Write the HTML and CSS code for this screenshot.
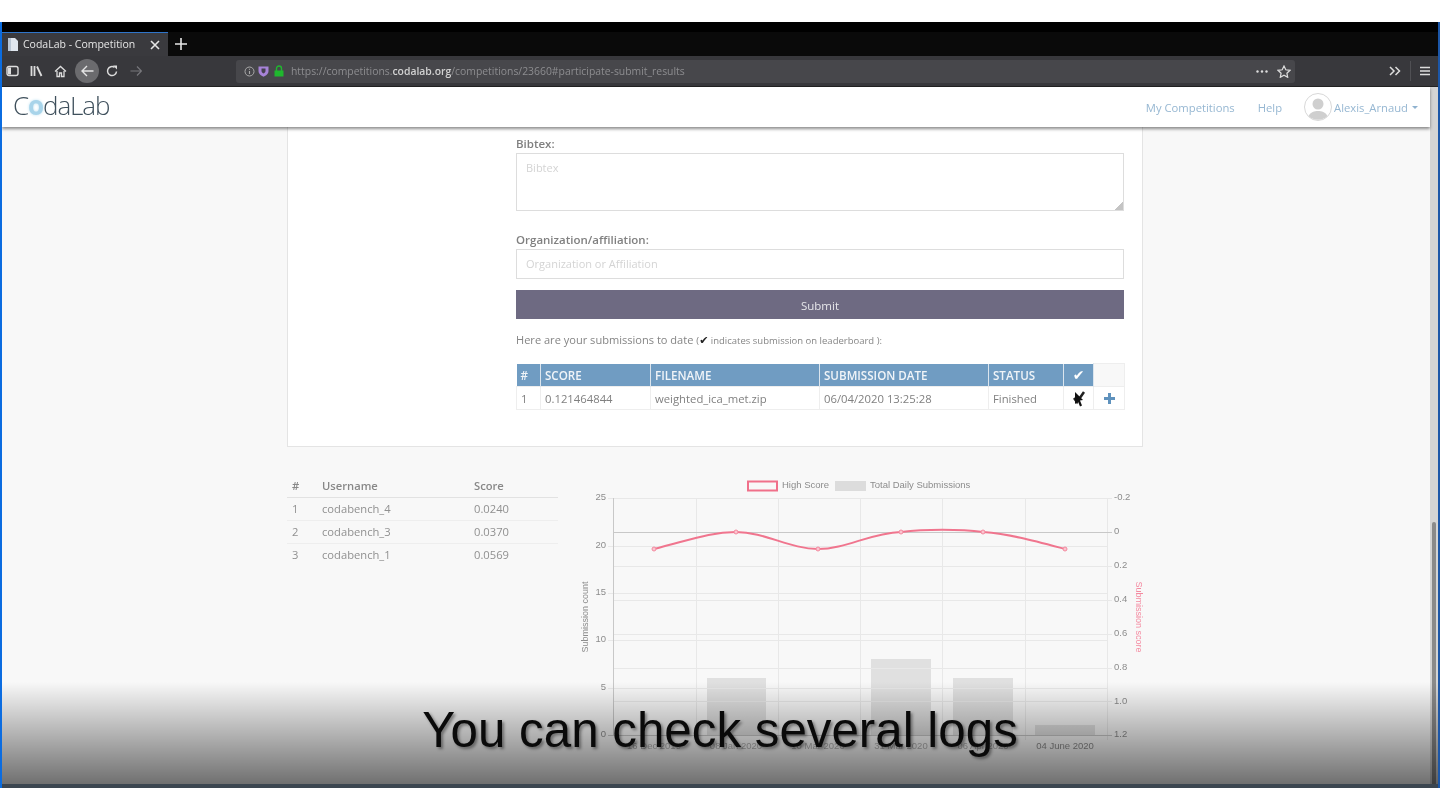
FILE: index.html
```html
<!DOCTYPE html>
<html lang="en">
<head>
    <meta charset="UTF-8">
    <title>CodaLab - Competition</title>
    <link rel="stylesheet" href="styles.css">
</head>
<body>
    <div class="frame">
        <div class="topstrip"></div>
        <div class="tabbar">
            <div class="tab">
                <svg class="tab-icon" width="12" height="13" viewBox="0 0 12 13"><path d="M1 0h7l3 3v10H1z" fill="#dfe6ee"/><path d="M1 0h3v13H1z" fill="#b9c6d4"/></svg>
                <span class="tab-title">CodaLab - Competition</span>
                <svg class="tab-close" width="10" height="10" viewBox="0 0 10 10"><path d="M1 1l8 8M9 1l-8 8" stroke="#e6e6e6" stroke-width="1.6"/></svg>
            </div>
            <svg class="tab-plus" width="12" height="12" viewBox="0 0 12 12"><path d="M6 0v12M0 6h12" stroke="#e6e6e6" stroke-width="1.6"/></svg>
        </div>
        <div class="toolbar">
            <div class="tool-group">
                <svg width="13" height="12" viewBox="0 0 13 12"><rect x="1" y="1.5" width="11" height="9" rx="2" fill="none" stroke="#ddd" stroke-width="1.4"/><path d="M2 2.5h3v7H2z" fill="#ddd"/></svg>
                <svg width="13" height="12" viewBox="0 0 13 12"><path d="M1.5 1v10M4.500 1v10" stroke="#ddd" stroke-width="1.8"/><path d="M7 1.5l4.5 9.5" stroke="#ddd" stroke-width="1.8"/></svg>
                <svg width="13" height="13" viewBox="0 0 13 13"><path d="M1 6.5L6.5 1.5l5.5 5M3 6v5.5h2.5V8h2v3.5H10V6" fill="none" stroke="#ddd" stroke-width="1.3"/></svg>
                <span class="back-btn">
                    <svg width="13" height="12" viewBox="0 0 13 12"><path d="M6 1L1 6l5 5M1 6h11.5" fill="none" stroke="#e4e4e4" stroke-width="1.4"/></svg>
                </span>
                <svg class="tool-reload" width="12" height="12" viewBox="0 0 12 12"><path d="M10.5 6.5A4.5 4.5 0 1 1 8.5 2.3" fill="none" stroke="#ddd" stroke-width="1.5"/><path d="M7 .5h4v4z" fill="#ddd"/></svg>
                <svg class="tool-forward" width="12" height="10" viewBox="0 0 12 10"><path d="M7 .5l4.5 4.5L7 9.5M11.5 5H.5" fill="none" stroke="#77777b" stroke-width="1.2"/></svg>
            </div>
            <div class="urlbar">
                <svg width="11" height="11" viewBox="0 0 11 11"><circle cx="5.5" cy="5.5" r="4.5" fill="none" stroke="#aaa"/><path d="M5.5 5v3M5.5 2.800v1" stroke="#aaa" stroke-width="1.1"/></svg>
                <svg class="url-shield" width="11" height="12" viewBox="0 0 11 12"><path d="M.5 1.5h10V6c0 3-2.5 4.700-5 5.800C3 10.700.5 9 .5 6z" fill="#a783d8"/><path d="M3.500 3.500h4V6c0 1.200-1 2-2 2.600-1-.6-2-1.400-2-2.600z" fill="#45404f"/></svg>
                <svg class="url-lock" width="10" height="12" viewBox="0 0 10 12"><path d="M2.500 6V3.500a2.500 2.500 0 0 1 5 0V6" fill="none" stroke="#1fb82e" stroke-width="1.4"/><rect x="0.5" y="5.5" width="9" height="6" fill="#1fb82e"/></svg>
                <span class="url">https://competitions.<b>codalab.org</b>/competitions/23660#participate-submit_results</span>
                <svg class="url-dots" width="12" height="3" viewBox="0 0 12 3"><circle cx="1.5" cy="1.5" r="1.2" fill="#ddd"/><circle cx="6" cy="1.5" r="1.2" fill="#ddd"/><circle cx="10.5" cy="1.5" r="1.2" fill="#ddd"/></svg>
                <svg width="14" height="13" viewBox="0 0 14 13"><path d="M7 1l1.800 3.800 4.200.5-3.100 2.900.8 4.100L7 10.300l-3.700 2 .8-4.100L1 5.300l4.200-.5z" fill="none" stroke="#ddd" stroke-width="1.2"/></svg>
            </div>
            <div class="tool-end">
                <svg width="12" height="10" viewBox="0 0 12 10"><path d="M1 1l4 4-4 4M6.500 1l4 4-4 4" fill="none" stroke="#ddd" stroke-width="1.5"/></svg>
                <span class="tool-sep"></span>
                <svg width="10" height="10" viewBox="0 0 10 10"><path d="M0 1.5h10M0 5h10M0 8.5h10" stroke="#ddd" stroke-width="1.5"/></svg>
            </div>
        </div>

        <div class="viewport">
            <div class="main">
                <div class="nav">
                    <a class="logo">C<span class="logo-o">o</span>daLab</a>
                    <div class="nav-links">
                        <a class="nav-link">My Competitions</a>
                        <a class="nav-link nav-help">Help</a>
                        <svg class="avatar" width="28" height="28" viewBox="0 0 28 28"><circle cx="14" cy="14" r="13.5" fill="#fff" stroke="#d8d8d8"/><circle cx="14" cy="11" r="5.5" fill="#cfcfcf"/><path d="M4.500 23c2-4 6-5 9.500-5s7.500 1 9.500 5c-5 5-14 5-19 0z" fill="#cfcfcf"/></svg>
                        <a class="nav-link nav-user">Alexis_Arnaud</a>
                        <span class="caret"></span>
                    </div>
                </div>

                <div class="page">
                    <div class="panel">
                        <label class="field-label">Bibtex:</label>
                        <textarea class="field-area" placeholder="Bibtex"></textarea>
                        <label class="field-label field-org">Organization/affiliation:</label>
                        <input class="field-input" placeholder="Organization or Affiliation">
                        <button class="submit-btn">Submit</button>
                        <p class="sub-note">Here are your submissions to date <small>(<span class="tick">✔</span> indicates submission on leaderboard ):</small></p>
                        <table class="subs">
                            <colgroup>
                                <col class="c-num"><col class="c-score"><col class="c-file"><col class="c-date"><col class="c-status"><col class="c-tick"><col class="c-plus">
                            </colgroup>
                            <thead>
                                <tr><th>#</th><th>SCORE</th><th>FILENAME</th><th>SUBMISSION DATE</th><th>STATUS</th><th class="tick">✔</th><th class="blank"></th></tr>
                            </thead>
                            <tbody>
                                <tr>
                                    <td>1</td><td>0.121464844</td><td>weighted_ica_met.zip</td><td>06/04/2020 13:25:28</td><td>Finished</td>
                                    <td class="cursor-cell">
                                        <svg width="14" height="18" viewBox="0 0 14 18"><path d="M2 9l3 4 7-10" fill="none" stroke="#222" stroke-width="2.5"/><path d="M3 3l8 8-3 .5 2 5-2 1-2-5-3 2.500z" fill="#111"/></svg>
                                    </td>
                                    <td class="plus-cell">
                                        <svg width="11" height="11" viewBox="0 0 11 11"><path d="M5.5 0v11M0 5.5h11" stroke="#5f92bd" stroke-width="3"/></svg>
                                    </td>
                                </tr>
                            </tbody>
                        </table>
                    </div>

                    <div class="lower">
                        <table class="board">
                            <thead>
                                <tr><th>#</th><th>Username</th><th>Score</th></tr>
                            </thead>
                            <tbody>
                                <tr><td>1</td><td>codabench_4</td><td>0.0240</td></tr>
                                <tr><td>2</td><td>codabench_3</td><td>0.0370</td></tr>
                                <tr><td>3</td><td>codabench_1</td><td>0.0569</td></tr>
                            </tbody>
                        </table>

                        <!-- viewBox uses the same numbers as the screen so the chart is easy to line up -->
                        <svg class="chart" width="575" height="285" viewBox="575 475 575 285">
                            <rect x="748" y="481.5" width="29" height="9" fill="none" stroke="#f0708a" stroke-width="2"/>
                            <text x="782" y="488">High Score</text>
                            <rect x="835" y="481" width="31" height="10" fill="#dcdcdc"/>
                            <text x="870" y="488">Total Daily Submissions</text>

                            <g class="bars">
                                <rect x="707" y="678" width="59" height="57"/>
                                <rect x="871" y="659" width="60" height="76"/>
                                <rect x="953" y="678" width="60" height="57"/>
                                <rect x="1035" y="725" width="60" height="10"/>
                            </g>

                            <g class="grid">
                                <path d="M608 498H1112M608 546H1107M608 593H1107M608 640H1107M608 688H1107"/>
                                <path d="M613 566H1112M613 600H1112M613 634H1112M613 668H1112M613 701H1112"/>
                                <path d="M696 498V740M778 498V740M860 498V740M942 498V740M1025 498V740M1107 498V740"/>
                            </g>
                            <path class="grid-dark" d="M613 532H1112M613 498V735M608 735H1112"/>

                            <g class="ticks">
                                <text x="606" y="500">25</text>
                                <text x="606" y="548">20</text>
                                <text x="606" y="595">15</text>
                                <text x="606" y="642">10</text>
                                <text x="606" y="690">5</text>
                                <text x="606" y="737">0</text>
                            </g>
                            <g>
                                <text x="1114" y="500">-0.2</text>
                                <text x="1114" y="534">0</text>
                                <text x="1114" y="568">0.2</text>
                                <text x="1114" y="602">0.4</text>
                                <text x="1114" y="636">0.6</text>
                                <text x="1114" y="670">0.8</text>
                                <text x="1114" y="704">1.0</text>
                                <text x="1114" y="737">1.2</text>
                            </g>
                            <g class="dates">
                                <text class="date-hidden" x="654" y="749">16 Dec 2019</text>
                                <text class="date-hidden" x="736" y="749">08 Jan 2020</text>
                                <text class="date-hidden" x="818" y="749">10 Mar 2020</text>
                                <text class="date-hidden" x="901" y="749">31 Mar 2020</text>
                                <text class="date-hidden" x="983" y="749">06 Apr 2020</text>
                                <text x="1065" y="749">04 June 2020</text>
                            </g>
                            <text class="axis-title" transform="translate(588 617) rotate(-90)">Submission count</text>
                            <text class="axis-title axis-pink" transform="translate(1136 617) rotate(90)">Submission score</text>

                            <path class="score-line" d="M654 549C690 540 710 532 736 532C765 532 790 549 818 549C846 549 870 533 901 532C925 529 960 529 983 532C1010 534 1035 541 1065 549"/>
                            <g class="score-dots">
                                <circle cx="654" cy="549" r="2"/><circle cx="736" cy="532" r="2"/><circle cx="818" cy="549" r="2"/>
                                <circle cx="901" cy="532" r="2"/><circle cx="983" cy="532" r="2"/><circle cx="1065" cy="549" r="2"/>
                            </g>
                        </svg>
                    </div>
                </div>
            </div>
            <div class="scrollbar"><div class="scroll-thumb"></div></div>
        </div>

        <div class="caption-shade"></div>
        <div class="caption">You can check several logs</div>
    </div>
</body>
</html>
```

FILE: styles.css
```css
*{
    margin: 0;
    padding: 0;
    box-sizing: border-box;
}
body{
    background: #fff;
    padding-top: 22px;
    font-family: "Open Sans", "Liberation Sans", sans-serif;
    overflow: hidden;
}
/* the reference is a video frame, so everything is a little soft */
.frame{
    position: relative;
    height: 766px;
    display: flex;
    flex-direction: column;
    overflow: hidden;
    background: #f8f8f8;
    border-left: 2px solid #0b6ce0;
    border-right: 2px solid #1c57a8;
    filter: blur(0.45px);
}

/* browser chrome */
.topstrip{
    height: 10px;
    background: #000;
}
.tabbar{
    height: 24px;
    background: #0a0a0a;
    display: flex;
    align-items: center;
    color: #e6e6e6;
}
.tab{
    width: 166px;
    height: 24px;
    background: #3a3a3e;
    border-top: 1px solid #2f74c8;
    display: flex;
    align-items: center;
    padding-left: 5px;
    font-size: 10.5px;
}
.tab-title{
    margin-left: 4px;
    width: 123px;
    padding-bottom: 2px;
    white-space: nowrap;
}
.tab-close{
    margin-left: 4px;
}
.tab-plus{
    margin-left: 7px;
}
.toolbar{
    height: 31px;
    background: #38383c;
    border-bottom: 1px solid #222;
    display: flex;
    align-items: center;
}
.tool-group{
    width: 234px;
    display: flex;
    align-items: center;
    padding-left: 4px;
    gap: 11px;
}
.back-btn{
    width: 24px;
    height: 24px;
    margin-left: -3px;
    border-radius: 50%;
    background: #6b6b6e;
    display: flex;
    align-items: center;
    justify-content: center;
}
.tool-reload{
    margin-left: -4px;
}
.tool-forward{
    margin-left: 1px;
}
.urlbar{
    width: 1059px;
    height: 23px;
    background: #47474b;
    border-radius: 3px;
    display: flex;
    align-items: center;
    gap: 4px;
    padding: 0 4px 0 8px;
}
.url-shield{
    margin-left: -1px;
}
.url-lock{
    margin-left: 1px;
}
.url{
    margin-left: 3px;
    flex: 1;
    font-size: 10.4px;
    color: #8d8d90;
    white-space: nowrap;
}
.url b{
    color: #d2d2d2;
    font-weight: 600;
}
.url-dots{
    margin-right: 5px;
}
.tool-end{
    flex: 1;
    display: flex;
    align-items: center;
    justify-content: flex-end;
    gap: 9px;
    padding-right: 8px;
}
.tool-sep{
    width: 1px;
    height: 20px;
    background: #505054;
}

/* site */
.viewport{
    flex: 1;
    display: flex;
    min-height: 0;
}
.main{
    flex: 1;
    min-width: 0;
    display: flex;
    flex-direction: column;
}
.scrollbar{
    width: 8px;
    background: #d4d4d4;
    display: flex;
    flex-direction: column;
    justify-content: flex-end;
    padding: 0 2px;
}
.scroll-thumb{
    height: 266px;
    background: #8a8a8a;
    border-radius: 2px;
}
.nav{
    height: 40px;
    flex-shrink: 0;
    background: #fff;
    box-shadow: 0 2px 3px rgba(0,0,0,0.45);
    display: flex;
    align-items: center;
    justify-content: space-between;
    padding: 0 12px 0 11px;
    position: relative;
    z-index: 2;
}
.logo{
    font-size: 26px;
    font-weight: 300;
    letter-spacing: -1.1px;
    color: #3f505c;
    padding-bottom: 5px;
}
.logo-o{
    color: #a8d4ea;
    font-weight: 700;
    text-shadow: 0 0 3px #bfe2f2;
}
.nav-links{
    display: flex;
    align-items: center;
    font-size: 11.25px;
    color: #96b7d2;
    padding-top: 1px;
}
.nav-help{
    margin-left: 23px;
}
.avatar{
    margin-left: 22px;
    margin-top: -1px;
}
.nav-user{
    margin-left: 2px;
}
.caret{
    margin-left: 4px;
    border-top: 3px solid #8fb2cf;
    border-left: 3px solid transparent;
    border-right: 3px solid transparent;
}
.page{
    flex: 1;
    padding-left: 285px;
    width: 1141px;
    color: #777;
}
.panel{
    width: 856px;
    height: 320px;
    background: #fff;
    border: 1px solid #e4e4e4;
    border-top: 0;
    padding: 9px 18px 0 228px;
    display: flex;
    flex-direction: column;
    font-size: 11.5px;
}
.field-label{
    height: 17px;
    line-height: 15px;
    font-weight: 600;
    font-size: 11.5px;
    color: #808080;
}
.field-org{
    margin-top: 21px;
}
.field-area,
.field-input{
    display: block;
    width: 608px;
    border: 1px solid #ddd;
    padding: 0 9px;
    font: 11px "Open Sans", sans-serif;
    outline: none;
    background: #fff;
}
.field-area{
    height: 58px;
    padding-top: 6px;
}
.field-area::-webkit-resizer{
    background: linear-gradient(135deg, transparent 72%, #c4c4c4 72%);
}
.field-input{
    height: 30px;
    padding-bottom: 2px;
}
.field-area::placeholder,
.field-input::placeholder{
    color: #d4d4d4;
    opacity: 1;
}
.submit-btn{
    width: 608px;
    height: 29px;
    margin-top: 11px;
    padding-top: 1px;
    background: #6e6a82;
    border: 0;
    color: #e6e6ea;
    font: 11.5px "Open Sans", sans-serif;
}
.sub-note{
    margin-top: 11px;
    height: 20px;
    line-height: 20px;
    font-size: 11.07px;
    color: #858585;
    white-space: nowrap;
}
.sub-note small{
    font-size: 9.5px;
}
.sub-note .tick{
    color: #222;
    font-family: "DejaVu Sans", sans-serif;
    font-size: 11px;
}
.subs{
    margin-top: 13px;
    width: 608px;
    table-layout: fixed;
    border-collapse: collapse;
}
.c-num{ width: 24px; }
.c-score{ width: 110px; }
.c-file{ width: 169px; }
.c-date{ width: 169px; }
.c-status{ width: 75px; }
.c-tick{ width: 30px; }
.c-plus{ width: 31px; }
.subs th{
    height: 23px;
    background: #709cc2;
    color: #f0f4f8;
    font-size: 11.6px;
    font-weight: 600;
    text-align: left;
    padding: 1px 0 0 4px;
    border-right: 1px solid #dbe5ee;
}
.subs th.tick{
    font-family: "DejaVu Sans", sans-serif;
    font-size: 14px;
    color: #fff;
    text-align: center;
    padding: 0;
}
.subs th.blank{
    background: #f8f8f8;
    border: 1px solid #eee;
}
.subs td{
    height: 23px;
    border: 1px solid #eee;
    font-size: 11.3px;
    padding-left: 4px;
    color: #808080;
    white-space: nowrap;
}
.subs td.cursor-cell,
.subs td.plus-cell{
    padding: 0;
    text-align: center;
}
.cursor-cell svg,
.plus-cell svg{
    display: block;
    margin: 0 auto;
}

.lower{
    margin-top: 28px;
    display: flex;
}
.board{
    width: 271px;
    height: 91px;
    flex-shrink: 0;
    border-collapse: collapse;
    font-size: 11.2px;
    margin-right: 17px;
    align-self: flex-start;
}
.board th{
    height: 22px;
    text-align: left;
    font-weight: 600;
    border-bottom: 1px solid #e2e2e2;
    padding: 0 0 0 5px;
    color: #888;
}
.board td{
    height: 23px;
    border-bottom: 1px solid #eee;
    padding-left: 5px;
    color: #909090;
}
.board tr:last-child td{
    border-bottom: 0;
}
.board th:nth-child(1){
    width: 30px;
}
.board th:nth-child(2){
    width: 152px;
}
.chart{
    display: block;
    flex-shrink: 0;
    font: 9.5px "Liberation Sans", sans-serif;
    fill: #8c8c8c;
}
.bars rect{
    fill: #e0e0e0;
}
.grid path{
    fill: none;
    stroke: #e8e8e8;
    shape-rendering: crispEdges;
}
.grid-dark{
    fill: none;
    stroke: #c8c8c8;
    shape-rendering: crispEdges;
}
.ticks text{
    text-anchor: end;
}
.dates text{
    text-anchor: middle;
}
/* these sit behind the subtitle and hardly show through it */
.dates .date-hidden{
    fill: #b0b0b0;
}
.axis-title{
    text-anchor: middle;
    font-size: 9px;
}
.axis-pink{
    fill: #f48aa0;
}
.score-line{
    fill: none;
    stroke: #f0758e;
    stroke-width: 2;
}
.score-dots circle{
    fill: #fbc4cf;
    stroke: #f48aa0;
}

/* subtitle layer of the video */
.caption-shade{
    position: absolute;
    left: 0;
    right: 0;
    bottom: 0;
    height: 106px;
    background: linear-gradient(to bottom, rgba(0,0,0,0) 0, rgba(0,0,0,0.55) 102px, #3c4650 102px);
    pointer-events: none;
}
.caption{
    position: absolute;
    left: 0;
    right: 0;
    top: 678px;
    text-align: center;
    font: 49.3px/60px "Liberation Sans", sans-serif;
    color: #0a0a0a;
    text-shadow: 2px 2px 3px rgba(0,0,0,0.4);
    white-space: nowrap;
}
```
